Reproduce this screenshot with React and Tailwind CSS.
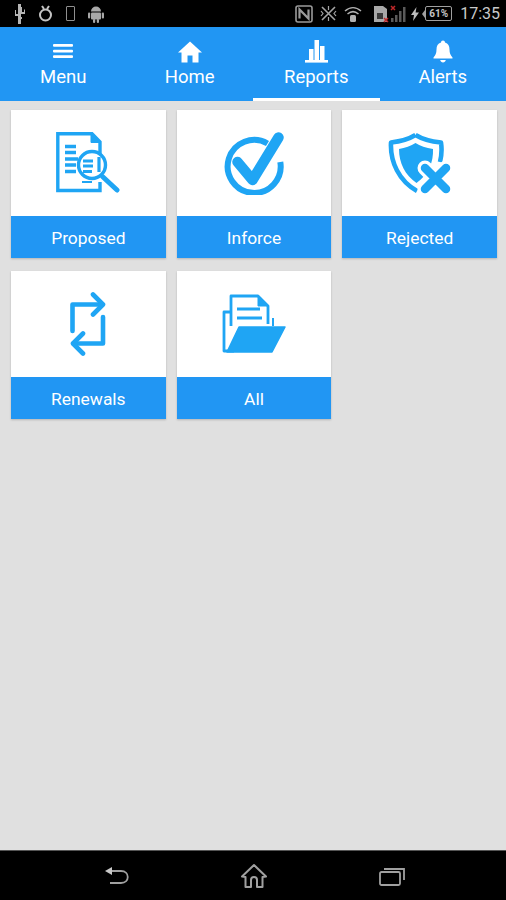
const BLUE = "#1fa5f4";

function MenuIcon() {
  return (
    <svg width="22" height="21" viewBox="0 0 22 21" fill="#fff">
      <rect x="1" y="2" width="20" height="2.8" rx="1" />
      <rect x="1" y="7.7" width="20" height="2.8" rx="1" />
      <rect x="1" y="13.2" width="20" height="2.8" rx="1" />
    </svg>
  );
}

function HomeIcon() {
  return (
    <svg width="24" height="22" viewBox="0 0 24 22" fill="#fff">
      <path d="M12 0.5 L24 11.5 L20.5 11.5 L20.5 21.5 L14.5 21.5 L14.5 14.5 L9.5 14.5 L9.5 21.5 L3.5 21.5 L3.5 11.5 L0 11.5 Z" />
    </svg>
  );
}

function ReportsIcon() {
  return (
    <svg width="24" height="24" viewBox="0 0 24 24" fill="#fff">
      <rect x="5" y="10" width="4.5" height="12" />
      <rect x="10.5" y="1" width="4.5" height="21" />
      <rect x="16" y="7" width="4.5" height="15" />
      <rect x="1" y="21" width="23" height="2.6" />
    </svg>
  );
}

function BellIcon() {
  return (
    <svg width="20" height="23" viewBox="0 0 20 23" fill="#fff">
      <path d="M10 0.5 C11.2 0.5 12 1.3 12 2.6 C15.2 3.5 16.5 6 16.5 9.5 C16.5 13.5 17.5 15 19.5 17.5 L19.5 18.5 L0.5 18.5 L0.5 17.5 C2.5 15 3.5 13.5 3.5 9.5 C3.5 6 4.8 3.5 8 2.6 C8 1.3 8.8 0.5 10 0.5 Z" />
      <path d="M7.2 20 L12.8 20 C12.5 21.6 11.4 22.5 10 22.5 C8.6 22.5 7.5 21.6 7.2 20 Z" />
    </svg>
  );
}

function ProposedIcon() {
  return (
    <svg width="64" height="62" viewBox="0 0 64 62" fill="none" stroke={BLUE}>
      <path d="M44 24 L44 10 L36 1.8 L1.8 1.8 L1.8 58.5 L44 58.5 L44 50" strokeWidth="3.4" />
      <path d="M35 2 L35 10.5 L43 10.5 Z" fill={BLUE} strokeWidth="1" />
      <path d="M9 14.5 H20 M9 20.5 H20 M9 27 H22 M9 33 H20 M9 39.5 H20" strokeWidth="3.4" />
      <circle cx="36" cy="33" r="13.5" fill="#fff" strokeWidth="3.4" />
      <path d="M27 29 H37 M27 34 H37 M27 39.5 H36 M43 25 V40" strokeWidth="3.2" />
      <path d="M26 50 H36" strokeWidth="2" />
      <path d="M47 45 L61 58" strokeWidth="5" strokeLinecap="round" />
    </svg>
  );
}

function InforceIcon() {
  return (
    <svg width="60" height="64" viewBox="0 0 60 64" fill="none" stroke={BLUE}>
      <path d="M43.5 12.5 A26.5 26.5 0 1 0 56.3 31" strokeWidth="6" />
      <path d="M13.5 31 L28.5 49 L54.5 6.5" strokeWidth="10.5" strokeLinecap="round" strokeLinejoin="round" />
    </svg>
  );
}

function RejectedIcon() {
  return (
    <svg width="64" height="62" viewBox="0 0 64 62" fill="none">
      <path d="M27.5 3 C34 7 43 9.5 53 10.5 C54 17 53.5 24 52 30 M27.5 3 C21 7 12 9.5 3 10.5 C2 30 11 49 29 59" stroke={BLUE} strokeWidth="4.6" strokeLinejoin="round" />
      <path d="M27.5 11 C32 14 38 16 45 17 C45.5 30 41 42 28.5 51 C17 43 11 31 11 17 C17 16 23 14 27.5 11 Z" fill={BLUE} />
      <path d="M37 36 L58 57 M58 36 L37 57" stroke="#fff" strokeWidth="15" strokeLinecap="round" />
      <path d="M37 36 L58 57 M58 36 L37 57" stroke={BLUE} strokeWidth="8.5" strokeLinecap="round" />
    </svg>
  );
}

function RenewalsIcon() {
  return (
    <svg width="36" height="64" viewBox="0 0 36 64" fill="none" stroke={BLUE} strokeWidth="4.6" strokeLinecap="round" strokeLinejoin="round">
      <path d="M2.5 39 L2.5 12.5 L32 12.5" />
      <path d="M23 2.5 L33 12.5 L23 22.5" />
      <path d="M33 25 L33 51.5 L3.5 51.5" />
      <path d="M13 41.5 L3 51.5 L13 61.5" />
    </svg>
  );
}

function AllIcon() {
  return (
    <svg width="64" height="60" viewBox="0 0 64 60" fill="none" stroke={BLUE}>
      <path d="M9 18 L2 18 L2 57 L12 57" strokeWidth="2.8" strokeLinejoin="round" />
      <path d="M9 32 L9 2 L36 2 L46 12 L46 30" strokeWidth="2.8" strokeLinejoin="round" />
      <path d="M36 3 L36 12 L45 12 Z" fill={BLUE} strokeWidth="1" />
      <path d="M15 15 H38 M15 24 H40" strokeWidth="3" />
      <path d="M51 24 V32" strokeWidth="2" />
      <path d="M17 33 L63 33 L50 58 L5 58 Z" fill={BLUE} stroke={BLUE} strokeWidth="1.5" strokeLinejoin="round" />
    </svg>
  );
}

function StatusLeft() {
  return (
    <div className="flex items-center">
      <svg className="ml-[14px]" width="11" height="22" viewBox="0 0 11 22" fill="#b5b5b5">
        <path d="M4 1 H7 V4 H8 V9 H10 V6.5 H11 V11 H7 V14 H8 V16 H7 V21 H4 V13 H1 V7 H2 V11 H4 Z" />
      </svg>
      <svg className="ml-[13px]" width="15" height="20" viewBox="0 0 15 20" fill="none" stroke="#c4c4c4" strokeWidth="2">
        <circle cx="7.5" cy="11" r="5.5" />
        <path d="M4 2 L6 5 M11 2 L9 5" />
      </svg>
      <div className="ml-[13px] w-[9px] h-[15px] border border-[#8f8f8f] rounded-[1px]" />
      <svg className="ml-[13px]" width="16" height="18" viewBox="0 0 16 18" fill="#a8a8a8">
        <path d="M3 6.5 A5 5 0 0 1 13 6.5 Z" />
        <rect x="3" y="7.5" width="10" height="7" rx="1" />
        <rect x="0" y="7.5" width="2.2" height="6" rx="1" />
        <rect x="13.8" y="7.5" width="2.2" height="6" rx="1" />
        <rect x="5" y="14" width="2.2" height="4" rx="1" />
        <rect x="8.8" y="14" width="2.2" height="4" rx="1" />
      </svg>
    </div>
  );
}

function StatusRight() {
  return (
    <div className="flex items-center">
      <svg width="18" height="18" viewBox="0 0 18 18" fill="none" stroke="#9a9a9a">
        <rect x="1" y="1" width="16" height="16" rx="2" strokeWidth="1.6" />
        <path d="M4.5 13.5 V4.5 L13.5 13.5 V4.5" strokeWidth="2.2" />
      </svg>
      <svg className="ml-[7px]" width="17" height="17" viewBox="0 0 17 17" fill="none" stroke="#a4a4a4" strokeWidth="1.6">
        <path d="M2 2 L15 15 M15 2 L2 15" />
        <path d="M1 6 L3 8.5 L1 11 M16 6 L14 8.5 L16 11 M8.5 1 V5 M8.5 12 V16" strokeWidth="1.2" />
      </svg>
      <svg className="ml-[7px]" width="18" height="18" viewBox="0 0 18 18" fill="none" stroke="#b0b0b0" strokeWidth="1.5">
        <path d="M1 6 C6 1.5 12 1.5 17 6 M3.5 9 C7 6 11 6 14.5 9" />
        <rect x="6" y="10" width="6" height="7" rx="1.5" fill="#b0b0b0" stroke="none" />
      </svg>
      <svg className="ml-[12px]" width="33" height="18" viewBox="0 0 33 18">
        <path d="M0 1 H9 L13 4 V17 H0 Z" fill="#a8a8a8" />
        <rect x="3" y="8" width="6" height="6" fill="#3a3a3a" />
        <path d="M10 13 L14 17 M14 13 L10 17" stroke="#c0282a" strokeWidth="1.5" />
        <path d="M17 1 L21 5 M21 1 L17 5" stroke="#c0282a" strokeWidth="1.5" />
        <rect x="17" y="13" width="2.5" height="4" fill="#5a5a5a" />
        <rect x="21" y="10" width="2.5" height="7" fill="#5a5a5a" />
        <rect x="25" y="6" width="2.5" height="11" fill="#5a5a5a" />
        <rect x="29" y="2" width="2.5" height="15" fill="#5a5a5a" />
      </svg>
      <svg className="ml-[4px]" width="8" height="14" viewBox="0 0 8 14" fill="#bdbdbd">
        <path d="M5.5 0 L0 8 H3 L2 14 L8 5.5 H4.6 Z" />
      </svg>
      <div className="ml-[3px] flex items-center">
        <div className="w-0 h-0 border-y-[4px] border-y-transparent border-r-[3px] border-r-[#a0a0a0]" />
        <div className="w-[27px] h-[15px] border border-[#a0a0a0] rounded-[2px] flex items-center justify-center text-[10px] font-bold text-[#c4c4c4] leading-none">
          61%
        </div>
      </div>
      <span className="ml-[8px] mr-[6px] text-[16px] leading-none text-[#c9c9c9]">17:35</span>
    </div>
  );
}

function Tab({ icon, label, active }) {
  return (
    <div className={"flex-1 flex flex-col items-center border-b-[3px] " + (active ? "border-white" : "border-transparent")}>
      <div className="h-[24px] mt-[12px] flex items-end justify-center">{icon}</div>
      <span className="mt-[3px] text-[18.5px] leading-[22px] text-white">{label}</span>
    </div>
  );
}

function Tile({ icon, label }) {
  return (
    <div className="bg-white flex flex-col h-[148px] shadow-[0_1px_2px_rgba(0,0,0,0.2)]">
      <div className="h-[106px] flex items-center justify-center">{icon}</div>
      <div className="h-[42px] pt-[2px] bg-[#2196f3] flex items-center justify-center text-white text-[17.4px]">
        {label}
      </div>
    </div>
  );
}

export default function App() {
  return (
    <div className="w-[506px] h-[900px] flex flex-col bg-[#e0e0e0] font-['Roboto',sans-serif]">
      {/* status bar */}
      <div className="h-[27px] bg-black flex items-center justify-between">
        <StatusLeft />
        <StatusRight />
      </div>

      {/* tabs */}
      <div className="h-[74px] bg-[#2196f3] flex">
        <Tab icon={<MenuIcon />} label="Menu" />
        <Tab icon={<HomeIcon />} label="Home" />
        <Tab icon={<ReportsIcon />} label="Reports" active />
        <Tab icon={<BellIcon />} label="Alerts" />
      </div>

      {/* report tiles */}
      <div className="flex-1 pt-[9px] pl-[11px] pr-[9px]">
        <div className="grid grid-cols-3 gap-x-[11px] gap-y-[13px]">
          <Tile icon={<ProposedIcon />} label="Proposed" />
          <Tile icon={<InforceIcon />} label="Inforce" />
          <Tile icon={<RejectedIcon />} label="Rejected" />
          <Tile icon={<RenewalsIcon />} label="Renewals" />
          <Tile icon={<AllIcon />} label="All" />
        </div>
      </div>

      {/* android nav */}
      <div className="h-[50px] bg-black border-t border-[#555] flex items-center">
        <svg className="ml-[104px]" width="26" height="20" viewBox="0 0 26 20" fill="none" stroke="#a0a0a0" strokeWidth="1.8">
          <path d="M3 5 H17 C26 5 26 17 17 17 H6" />
          <path d="M1 5 L8 1 V9 Z" fill="#c8c8c8" stroke="none" />
        </svg>
        <svg className="ml-[111px]" width="26" height="26" viewBox="0 0 26 26" fill="none" stroke="#a0a0a0" strokeWidth="2" strokeLinejoin="round">
          <path d="M13 2 L25 13.5 L21.5 14 V24 H16 V17 C16 13 10 13 10 17 V24 H4.5 V14 L1 13.5 Z" />
        </svg>
        <svg className="ml-[112px]" width="26" height="20" viewBox="0 0 26 20" fill="none" stroke="#a0a0a0" strokeWidth="1.8">
          <rect x="1" y="6" width="20" height="13" rx="1.5" />
          <path d="M5 3 H25 V14" />
        </svg>
      </div>
    </div>
  );
}
